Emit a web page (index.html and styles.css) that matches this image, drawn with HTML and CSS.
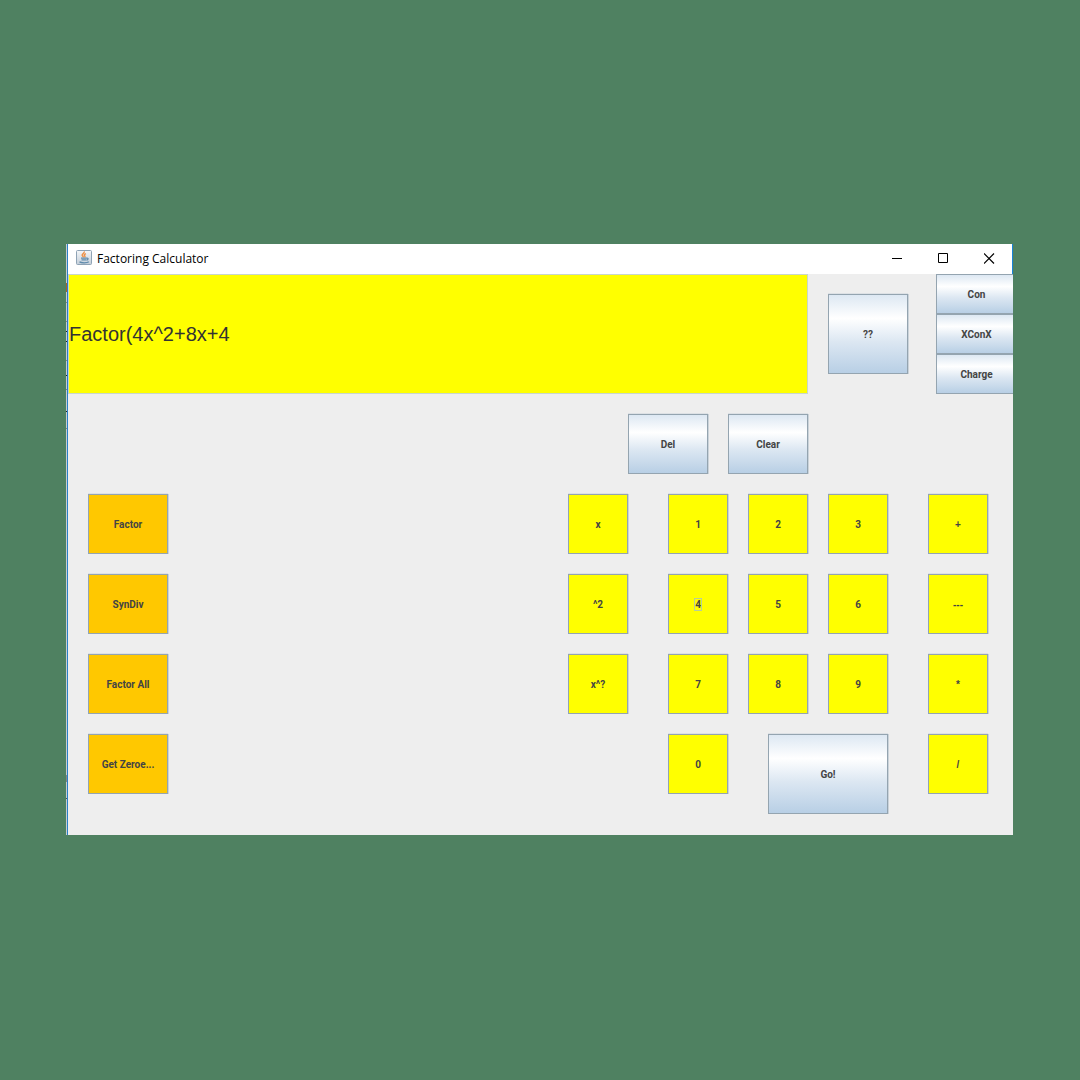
FILE: index.html
```html
<!DOCTYPE html>
<html lang="en">
<head>
<meta charset="utf-8">
<meta name="viewport" content="width=device-width, initial-scale=1">
<title>Factoring Calculator</title>
<link rel="stylesheet" href="styles.css">
</head>
<body>
<main class="window">
  <div class="backdrop-edge"></div>
  <div class="frame">
    <header class="titlebar">
      <svg class="app-icon" width="16" height="16" viewBox="0 0 16 16" aria-hidden="true">
        <defs><linearGradient id="tile" x1="0" y1="0" x2="0" y2="1"><stop offset="0" stop-color="#f5f7f9"/><stop offset="1" stop-color="#c3ced9"/></linearGradient></defs>
        <rect x=".5" y=".5" width="15" height="14" rx="1" fill="url(#tile)" stroke="#8fa3b5"/>
        <path d="M8 1.500c1 1.500-2.200 2.200-1.800 3.800.2.800 1.200 1.200 1.100 2M9.900 3.700C7.800 4.700 8.200 5.400 8.800 6c.4.500.1 1-.3 1.300" fill="none" stroke="#ee9046" stroke-width="1.400"/>
        <path d="M5 8.200h5.500M5.500 9.900h4.700M10.500 8.200c2.300-.4 1.800 1.600 0 2M3.500 11.900c2 1.200 7.500 1.200 9.300-.1" fill="none" stroke="#5f8bac" stroke-width="1.300"/>
      </svg>
      <h1 class="title">Factoring Calculator</h1>
      <button class="control" aria-label="Minimize"><svg width="11" height="11" viewBox="0 0 11 11"><path d="M0 5.500h10" stroke="#000"/></svg></button>
      <button class="control" aria-label="Maximize"><svg width="11" height="11" viewBox="0 0 11 11"><path d="M.5.500h9v9h-9z" fill="none" stroke="#000"/></svg></button>
      <button class="control" aria-label="Close"><svg width="11" height="11" viewBox="0 0 11 11"><path d="M0 .5l10 10M10 .5l-10 10" stroke="#000" stroke-width="1.200"/></svg></button>
    </header>

    <section class="top">
      <input class="display" type="text" aria-label="Expression" value="Factor(4x^2+8x+4">
      <button class="key metal help">??</button>
      <div class="side">
        <button class="key metal">Con</button>
        <button class="key metal">XConX</button>
        <button class="key metal">Charge</button>
      </div>
    </section>

    <section class="edit">
      <button class="key metal">Del</button>
      <button class="key metal">Clear</button>
    </section>

    <section class="bottom">
      <div class="commands">
        <button class="key orange">Factor</button>
        <button class="key orange">SynDiv</button>
        <button class="key orange">Factor All</button>
        <button class="key orange">Get Zeroe...</button>
      </div>
      <div class="pad">
        <button class="key yellow variable">x</button>
        <button class="key yellow first">1</button>
        <button class="key yellow">2</button>
        <button class="key yellow">3</button>
        <button class="key yellow operator">+</button>

        <button class="key yellow variable">^2</button>
        <button class="key yellow first"><span class="focused">4</span></button>
        <button class="key yellow">5</button>
        <button class="key yellow">6</button>
        <button class="key yellow operator">---</button>

        <button class="key yellow variable">x^?</button>
        <button class="key yellow first">7</button>
        <button class="key yellow">8</button>
        <button class="key yellow">9</button>
        <button class="key yellow operator">*</button>

        <button class="key yellow first">0</button>
        <button class="key metal go">Go!</button>
        <button class="key yellow operator">/</button>
      </div>
    </section>
  </div>
</main>
</body>
</html>
```
FILE: styles.css
```css
* {
  box-sizing: border-box;
}

body {
  margin: 0;
  min-height: 100vh;
  padding: 0 67px 1px 66px;
  display: flex;
  align-items: center;
  background: #4f8161;
  font-family: Roboto, "Liberation Sans", sans-serif;
}

.window {
  flex: 1;
  display: flex;
  min-width: 0;
}

/* A sliver of the desktop shows beside the window's blue outline. */
.backdrop-edge {
  width: 2px;
  border-right: 1px solid #2a80c8;
  background: linear-gradient(#c8cccf 39px, #a5652c 39px 48px, #c8cccf 48px 58px, #888 58px 59px,
    #c8cccf 59px 77px, #888 77px 78px, #c8cccf 78px 87px, #222 87px 88px,
    #c8cccf 88px 97px, #222 97px 98px, #c8cccf 98px 116px, #888 116px 117px,
    #c8cccf 117px 131px, #222 131px 132px, #c8cccf 132px 145px, #888 145px 146px,
    #c8cccf 146px 167px, #222 167px 168px, #c8cccf 168px 184px, #888 184px 185px,
    #c8cccf 185px 531px, #888 531px 538px, #c8cccf 538px 554px, #555 554px 555px, #c8cccf 555px);
}

.frame {
  flex: 1;
  min-width: 0;
  padding-bottom: 21px;
  background: #eee;
}

.titlebar {
  display: flex;
  align-items: center;
  height: 30px;
  padding-left: 8px;
  border-right: 1px solid #1883d7;
  background: #fff;
}

.app-icon {
  margin-bottom: 2px;
}

.title {
  flex: 1;
  margin: 0 0 0 5px;
  font: 12px/16px "Open Sans", sans-serif;
  color: #000;
}

.control {
  display: flex;
  align-items: center;
  justify-content: center;
  width: 46px;
  height: 30px;
  padding: 0 0 2px;
  border: 0;
  background: none;
}

.top {
  display: flex;
}

.display {
  flex: 1;
  min-width: 0;
  height: 120px;
  padding: 0;
  border: 1px solid #c8d6cc;
  border-radius: 0;
  outline: 0;
  background: #ff0;
  color: #333;
  font: 20px "Liberation Sans", sans-serif;
}

.key {
  width: 60px;
  height: 60px;
  padding: 2px 0 0;
  border: 1px solid #94a4b0;
  border-radius: 0;
  box-shadow: 1px 0 #cbd3da, 0 -1px #dde1e5;
  color: #444;
  font: bold 10px/14px Roboto, "Liberation Sans", sans-serif;
}

.metal {
  width: 80px;
  background: linear-gradient(#dde8f3, #fff 30%, #dce7f2 60%, #b8cfe5);
}

.yellow {
  background: #ff0;
}

.orange {
  width: 80px;
  background: #ffc800;
}

.help {
  height: 80px;
  margin: 20px 28px 0 20px;
}

.side {
  display: flex;
  flex-direction: column;
  width: 77px;
}

.side .key {
  width: 100%;
  height: 40px;
  padding-left: 3px;
  border-right: 0;
  box-shadow: none;
}

.edit {
  display: flex;
  justify-content: flex-end;
  gap: 20px;
  padding: 20px 205px 20px 20px;
}

.bottom {
  display: flex;
  justify-content: space-between;
  padding: 0 25px 0 20px;
}

.commands {
  display: flex;
  flex-direction: column;
  gap: 20px;
}

/* The empty tracks double the gap around the digit block. */
.pad {
  display: grid;
  grid-template-columns: 60px 0 60px 60px 60px 0 60px;
  gap: 20px;
  align-items: start;
}

.variable {
  grid-column: 1;
}

.first {
  grid-column: 3;
}

.operator {
  grid-column: 7;
  font-family: "Liberation Sans", sans-serif;
}

.go {
  grid-column: 4 / span 2;
  justify-self: end;
  width: 120px;
  height: 80px;
}

.focused {
  outline: 1px solid #b8cf9a;
}
```
